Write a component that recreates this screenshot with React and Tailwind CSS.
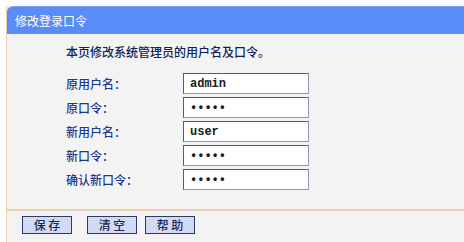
import React from "react";

const rows = [
  { label: "原用户名：", value: "admin" },
  { label: "原口令：", value: "•••••" },
  { label: "新用户名：", value: "user" },
  { label: "新口令：", value: "•••••" },
  { label: "确认新口令：", value: "•••••" },
];

const cjk = "font-['SimSun','Noto_Sans_CJK_SC',sans-serif]";

export default function App() {
  return (
    <div className="w-[464px] h-[242px] bg-white pt-[6px] pl-[6px] overflow-hidden">
      <div className="h-full flex flex-col border-l border-[#e6cfae] bg-[#f3f3f3]">
        {/* title bar */}
        <div className="h-[28px] bg-[#5a8cf8] rounded-tl-[6px] border-t border-[#7ba3f5] flex items-center pl-[8px]">
          <span className={`${cjk} text-[12px] text-white`}>修改登录口令</span>
        </div>

        <div className="h-[177px] pl-[59px] pt-[10px] border-b-2 border-[#ecd2b0]">
          <p className={`${cjk} text-[12px] font-medium text-[#0f1f58] leading-[16px]`}>
            本页修改系统管理员的用户名及口令。
          </p>
          <div className="mt-[13px] flex flex-col gap-[3px]">
            {rows.map((r) => (
              <div key={r.label} className="flex items-center h-[21px]">
                <span className={`${cjk} w-[117px] text-[12px] font-medium text-[#1a3a8c]`}>{r.label}</span>
                <div className="w-[126px] h-[21px] border border-[#4b5a8c] border-b-[#8f99bd] border-r-[#8f99bd] bg-white flex items-center pl-[6px]">
                  <span className="font-['Liberation_Mono',monospace] text-[12px] font-bold text-[#1a1a1a]">
                    {r.value}
                  </span>
                </div>
              </div>
            ))}
          </div>
        </div>

        {/* buttons */}
        <div className="flex items-center gap-[8px] pl-[15px] pt-[5px]">
          {["保 存", "清 空", "帮 助"].map((b, i) => (
            <button
              key={b}
              className={`${cjk} h-[18px] w-[50px] bg-[#d2d9f3] border border-[#2d3a66] text-[12px] font-medium text-[#1b2a55] leading-none ${i === 1 ? "ml-[7px]" : ""}`}
            >
              {b}
            </button>
          ))}
        </div>
      </div>
    </div>
  );
}
